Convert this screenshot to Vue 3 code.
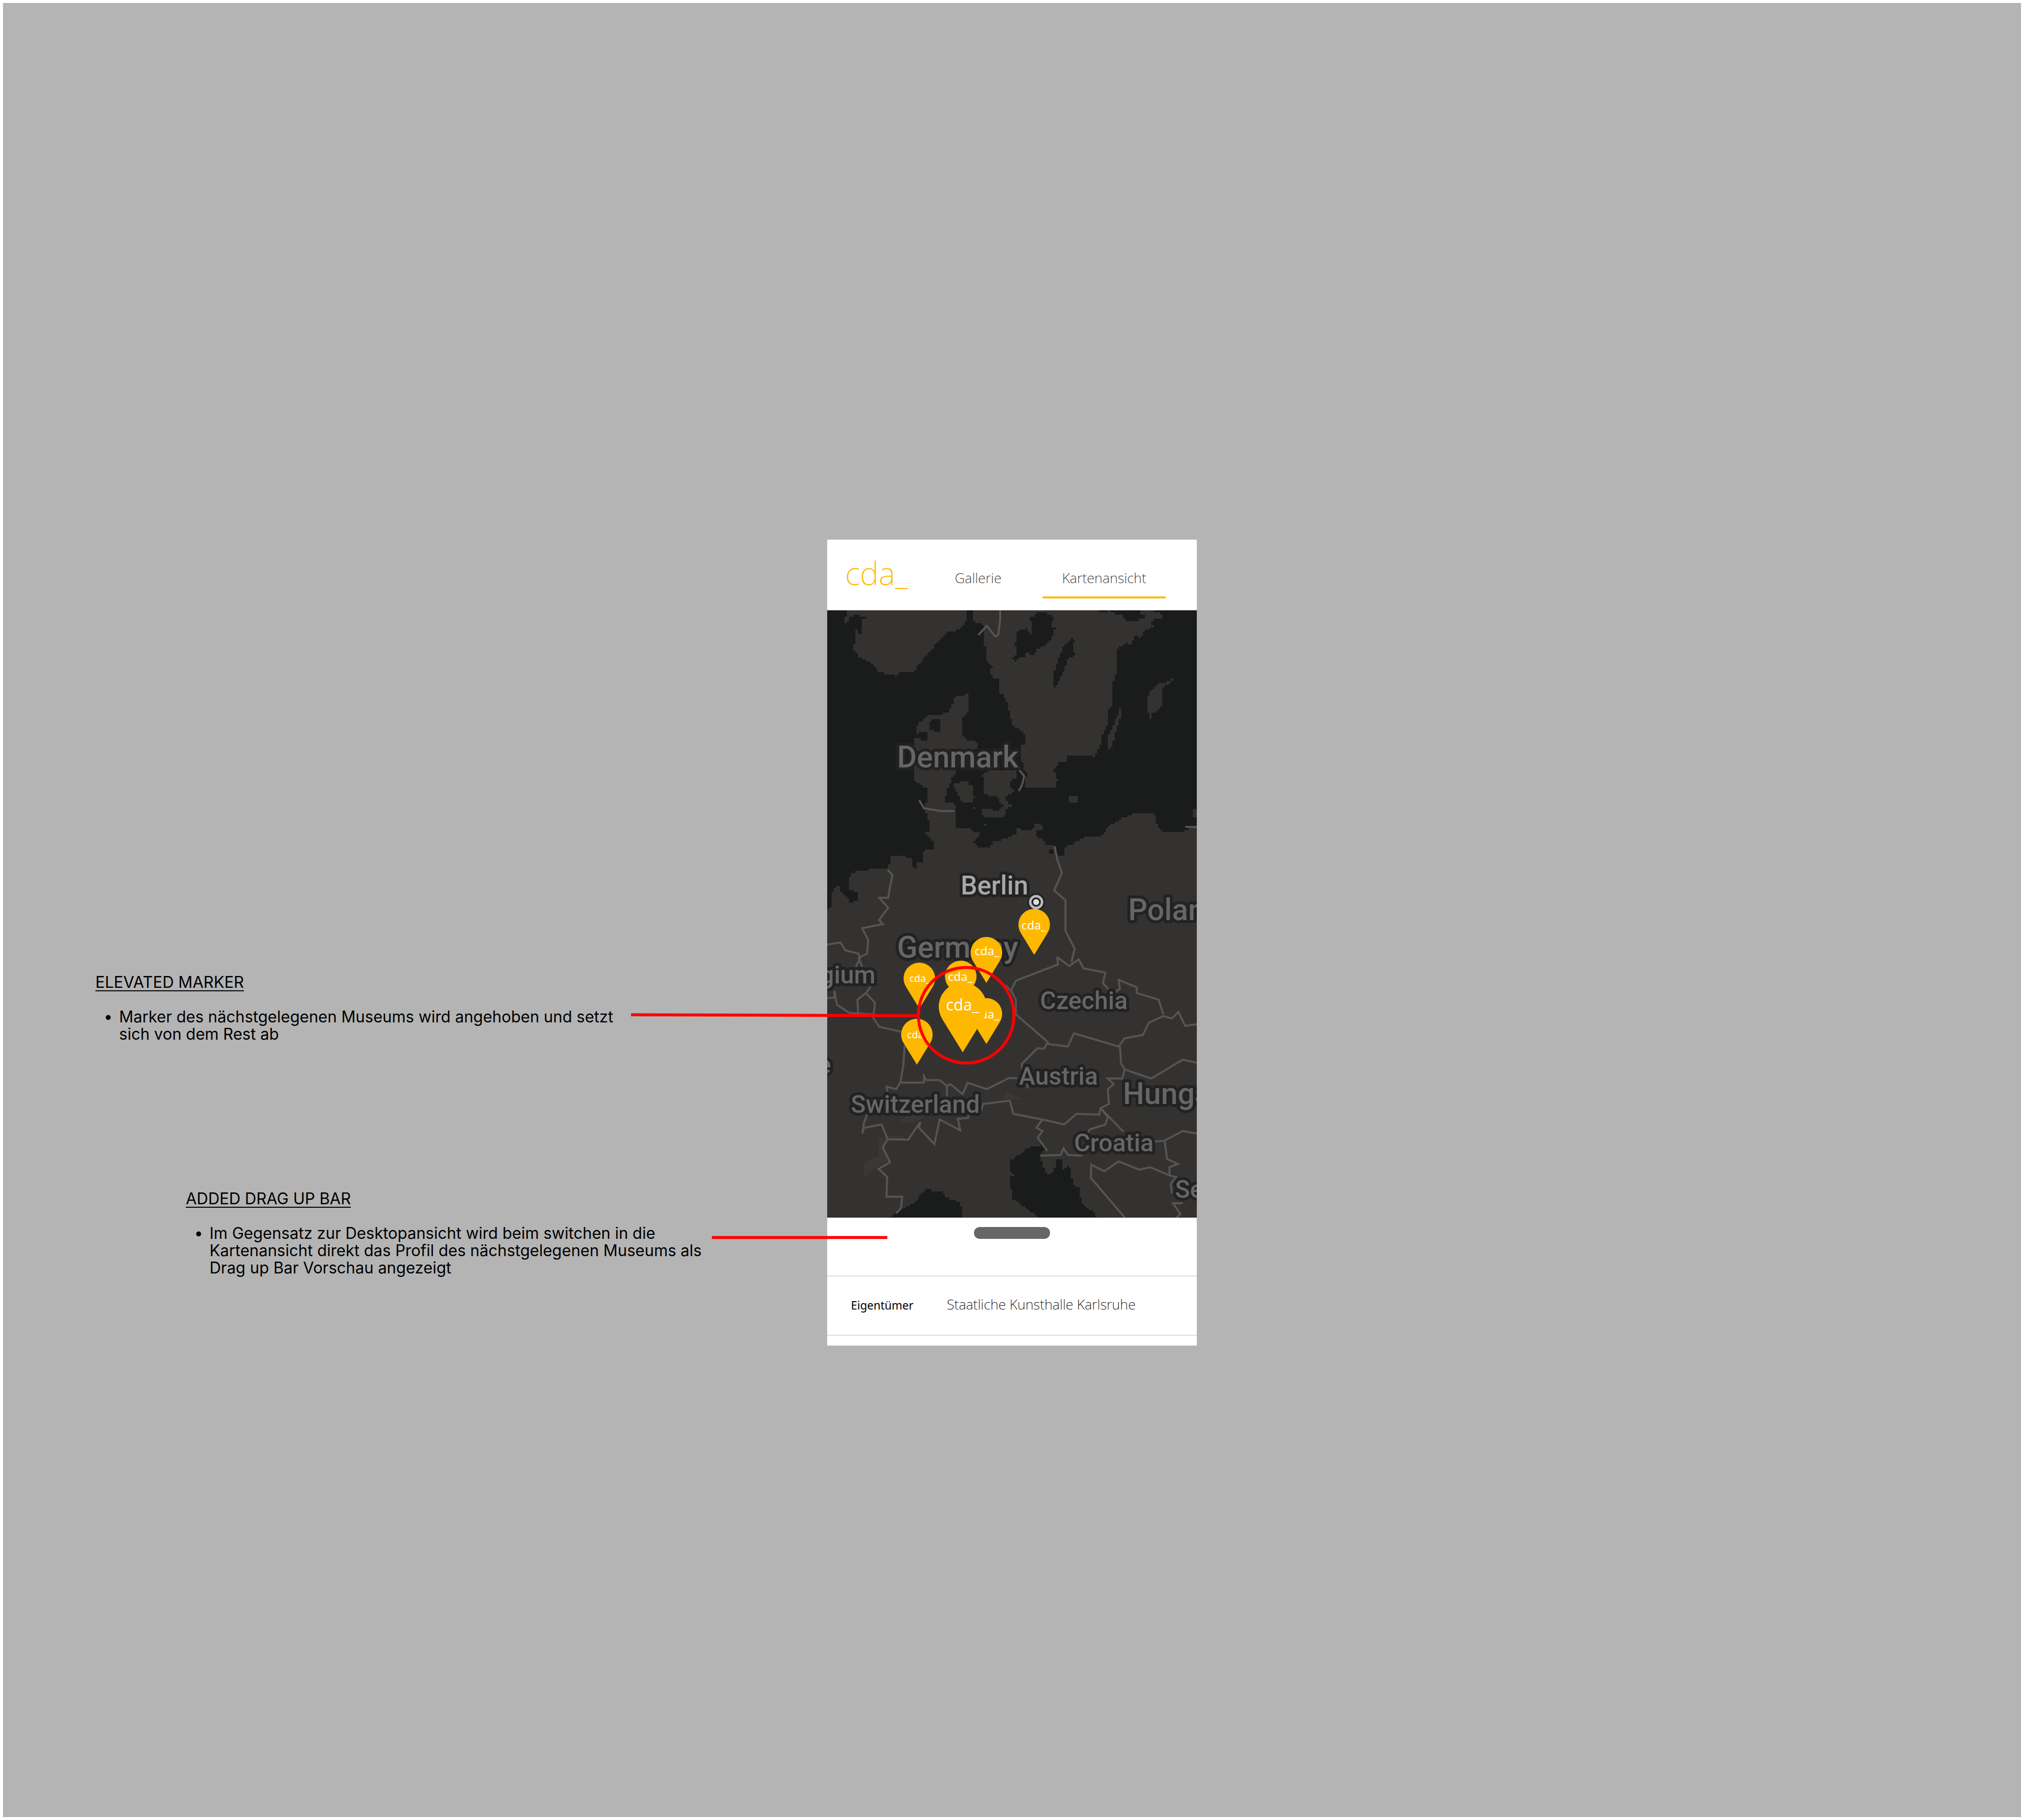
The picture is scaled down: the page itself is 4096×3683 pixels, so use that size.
<script setup>
const CELL_X = 9
const CELL_Y = 13

// Turns an outline into a stepped path, one step per map raster cell.
function stepped(outline) {
  const pts = outline.trim().split(/\s+/).map((p) => p.split(',').map(Number))
  const snap = ([x, y]) => [
    Math.round((x - 20) / CELL_X) * CELL_X + 20,
    Math.round((y - 30) / CELL_Y) * CELL_Y + 30
  ]
  const start = snap(pts[0])
  let d = `M${start[0]} ${start[1]}`
  pts.forEach((a, i) => {
    const b = pts[(i + 1) % pts.length]
    const n = Math.max(1, Math.round(Math.max(Math.abs(b[0] - a[0]) / CELL_X, Math.abs(b[1] - a[1]) / CELL_Y)))
    for (let s = 1; s <= n; s++) {
      const [x, y] = snap([a[0] + ((b[0] - a[0]) * s) / n, a[1] + ((b[1] - a[1]) * s) / n])
      d += `H${x}V${y}`
    }
  })
  return d + 'Z'
}

const land = [
  '100,30 597,30 597,70 588,120 570,145 545,160 525,155 490,215 440,290 405,350 380,405 330,408 310,432 300,420 260,415 232,405 230,375 200,345 155,310 130,262 135,185 135,135 145,175 168,175 160,100 178,65 135,60 115,75 105,110 92,110 92,75 100,70',
  '625,30 1135,30 1145,45 1175,45 1180,35 1200,38 1205,58 1240,62 1250,97 1305,97 1310,85 1332,82 1332,60 1315,55 1315,30 1360,30 1370,45 1395,50 1405,85 1360,90 1368,135 1330,155 1318,200 1295,180 1280,240 1265,230 1215,265 1212,455 1195,460 1202,600 1180,635 1185,720 1160,780 1150,850 1130,910 1120,935 1115,912 1010,912 1010,948 985,950 965,985 958,1020 972,1075 965,1103 843,1103 843,1050 850,1020 835,1000 818,900 820,848 843,845 843,800 785,715 765,590 745,540 730,535 728,450 712,440 697,405 700,365 680,325 670,230 668,115 640,105 625,80',
  '1445,447 1447,458 1405,512 1405,585 1410,600 1370,660 1355,703 1350,650 1343,620 1343,550 1360,510 1385,475 1420,468',
  '1230,628 1237,680 1220,740 1210,800 1195,860 1180,898 1177,800 1190,770 1205,720',
  '1020,1157 1037,1157 1054,1170 1054,1195 1020,1195',
  '595,525 607,565 607,650 582,690 582,795 592,820 633,820 640,870 600,890 555,1003 553,1025 530,1045 530,1078 520,1095 518,1165 502,1175 510,1205 525,1198 548,1220 553,1270 555,1352 612,1362 620,1388 650,1375 652,1405 627,1445 635,1465 690,1475 705,1440 755,1415 800,1385 802,1352 825,1355 820,1375 870,1373 872,1312 880,1335 903,1325 912,1373 885,1370 880,1410 905,1420 922,1465 965,1467 968,1515 972,1528 1000,1528 1000,1470 1030,1455 1075,1415 1120,1412 1160,1395 1180,1340 1230,1302 1300,1260 1368,1260 1385,1345 1398,1375 1455,1378 1480,1388 1510,1360 1520,1340 1560,1335 1560,3730 20,3730 20,1850 38,1820 38,1740 55,1710 72,1715 75,1740 92,1775 110,1790 110,1812 142,1790 142,1740 112,1720 110,1690 117,1625 170,1615 215,1598 245,1598 275,1615 275,1580 285,1530 360,1532 370,1565 372,1595 388,1605 390,1570 413,1568 413,1505 425,1492 457,1490 457,1440 445,1405 425,1382 448,1370 445,1330 425,1240 432,1180 432,1110 380,1065 380,810 425,825 440,830 432,770 390,780 390,735 405,700 430,668 485,665 520,645 535,600 548,550 585,548',
  '530,1078 560,1080 565,1065 600,1068 605,1100 622,1095 625,1165 632,1180 622,1205 590,1200 565,1155 545,1100',
  '690,1003 740,1010 800,1003 805,1055 775,1070 778,1110 790,1140 755,1160 755,1190 770,1215 790,1212 785,1222 765,1228 755,1275 735,1297 690,1295 660,1265 662,1238 690,1245 710,1258 745,1215 735,1185 710,1158 680,1150 668,1140 668,1040 660,1030',
  '1528,1235 1560,1235 1560,1285 1528,1285',
  '668,1336 677,1336 677,1349 668,1349',
  '625,1220 634,1220 634,1233 625,1233'
].map(stepped)

const water = [
  '880,50 905,45 945,60 955,80 945,130 962,145 948,210 930,240 890,265 875,305 850,285 835,310 805,340 775,325 800,290 805,260 795,235 808,150 840,138 855,170 868,172 862,100 853,65 862,75 872,60',
  '1030,203 1045,210 1032,270 1043,300 1012,335 1005,380 990,430 965,497 957,490 960,400 970,340 995,250',
  '460,693 485,693 485,768 465,768 442,755 442,705',
  '940,1492 958,1492 958,1517 940,1517',
  '850,3300 900,3285 922,3300 920,3315 900,3340 910,3420 935,3477 965,3410 968,3375 990,3375 995,3435 1012,3415 1027,3420 1035,3530 1060,3550 1075,3650 1130,3705 1132,3730 905,3730 860,3680 785,3605 775,3480 798,3460 780,3430 778,3375 810,3340',
  '270,3730 300,3695 385,3630 400,3590 425,3555 490,3570 520,3615 570,3630 580,3720 582,3730'
].map(stepped)

const borders = [
  '735,30 735,90 727,180 715,190 680,125 645,180',
  '400,1185 420,1235 490,1252 545,1252',
  '805,985 835,1040 825,1095 812,1130',
  '1500,1348 1548,1350',
  '270,1610 290,1640 280,1710 272,1780 235,1780 272,1840 235,1915 250,1940 165,1965 190,2040 185,2120 150,2145 165,2200',
  '20,2065 75,2052 95,2100 150,2120 155,2150 138,2200',
  '200,2320 180,2360 145,2400 148,2485',
  '180,2360 218,2420 210,2510 235,2565 325,2595',
  '20,2390 50,2388 50,2345 60,2430 110,2480 210,2490',
  '960,1465 970,1540 990,1630 958,1735 1005,1795 1005,1980 1043,2090 1030,2170',
  '970,2140 1020,2195 1060,2155 1080,2210 1170,2235 1160,2300 1200,2365 1230,2335 1225,2280 1300,2325 1300,2360 1390,2400 1410,2490',
  '970,2140 975,2185 800,2285 780,2345 800,2400 800,2490 930,2655 935,2670 1015,2685 1040,2605 1225,2685 1250,2635 1325,2615 1350,2540 1410,2500 1445,2515 1472,2475 1500,2560 1548,2550',
  '755,2310 780,2345',
  '930,2665 915,2700 890,2695 825,2790 825,2820 850,2940',
  '1230,2685 1235,2790 1250,2825 1240,2880 1180,2880 1205,2915 1180,2945 1185,3035 1150,3060 1145,3100 1050,3095 1000,3160 910,3130 790,3095 775,3015 665,3035 655,3080',
  '1250,2825 1360,2880 1490,2765 1548,2785',
  '340,2680 335,2800 322,2905 420,2905 420,2865 430,2890 485,2890 515,2925 530,2915 580,2975 600,2905 680,2945 770,2878 805,2878',
  '515,2925 515,2990',
  '322,2905 305,2945 265,2930 270,2960',
  '185,3100 172,3150 165,3215 172,3180 245,3160 270,3250 355,3252 405,3145 400,3180 463,3280 485,3130 570,3195 560,3125 603,3120 605,3090',
  '270,3250 250,3300 280,3390 232,3430 268,3480 265,3600 330,3600 325,3670 305,3700',
  '910,3130 885,3180 910,3200 890,3240 930,3320',
  '900,3350 985,3345 997,3305 1015,3345 1075,3350',
  '1150,3060 1180,3115 1170,3160 1105,3190 1100,3210',
  '1150,3060 1245,3205',
  '1370,3265 1415,3258 1490,3200 1548,3215',
  '1415,3258 1425,3370 1470,3400 1435,3420 1435,3465',
  '1250,3726 1110,3485 1112,3405 1165,3445 1225,3385 1310,3435 1355,3420 1435,3470 1462,3480 1440,3520 1445,3580',
  '1490,3640 1450,3640 1480,3705 1465,3726'
]

const labels = [
  { name: 'Denmark', x: 142, y: 319, size: 'l' },
  { name: 'Germany', x: 142, y: 705, size: 'l' },
  { name: 'Poland', x: 611, y: 629, size: 'l' },
  { name: 'Hungary', x: 600, y: 1002, size: 'l' },
  { name: 'Berlin', x: 271, y: 577, size: 'm', city: true },
  { name: 'Belgium', x: 98, y: 757, size: 'm', end: true },
  { name: 'France', x: 8, y: 940, size: 'm', end: true },
  { name: 'Czechia', x: 432, y: 809, size: 'm' },
  { name: 'Austria', x: 389, y: 963, size: 'm' },
  { name: 'Switzerland', x: 48, y: 1020, size: 'm' },
  { name: 'Croatia', x: 501, y: 1098, size: 'm' },
  { name: 'Serbia', x: 706, y: 1192, size: 'm' }
]

// x/y: tip of the pin; tx/ty: start of its caption
const pins = [
  { x: 420, y: 699, tx: 394, ty: 648, size: 'm' },
  { x: 271, y: 804, tx: 245, ty: 752, size: 'm' },
  { x: 323, y: 756, tx: 299, ty: 700, size: 'm' },
  { x: 187, y: 808, tx: 167, ty: 754, size: 's' },
  { x: 182, y: 922, tx: 162, ty: 868, size: 's' },
  { x: 323, y: 880, tx: 299, ty: 828, size: 'm' },
  { x: 275, y: 897, tx: 241, ty: 812, size: 'l', elevated: true }
]
</script>

<template>
  <main class="board">
    <section class="notes">
      <article class="note">
        <h2>ELEVATED MARKER</h2>
        <ul>
          <li>Marker des nächstgelegenen Museums wird angehoben und setzt sich von dem Rest ab</li>
        </ul>
      </article>
      <article class="note note-drag">
        <h2>ADDED DRAG UP BAR</h2>
        <ul>
          <li>Im Gegensatz zur Desktopansicht wird beim switchen in die Kartenansicht direkt das Profil des nächstgelegenen Museums als Drag up Bar Vorschau angezeigt</li>
        </ul>
      </article>
    </section>

    <section class="phone">
      <header class="topbar">
        <a class="logo" href="#">cda_</a>
        <nav class="tabs">
          <a class="tab" href="#gallerie">Gallerie</a>
          <a class="tab active" href="#karte">Kartenansicht</a>
        </nav>
      </header>

      <svg class="map" viewBox="0 0 750 1232" role="img" aria-label="Karte">
        <svg width="750" height="1232" viewBox="20 30 1528 3696" preserveAspectRatio="none">
          <path v-for="(d, i) in land" :key="'l' + i" class="land" :d="d" />
          <path v-for="(d, i) in water" :key="'w' + i" class="water" :d="d" />
          <polygon class="relief" points="172,3390 232,3350 232,3240 330,3225 340,3250 262,3260 250,3300 270,3380 172,3478" />
          <polygon class="relief" points="320,3140 345,3110 425,3110 375,3155" />
          <polygon class="relief" points="765,2960 825,3010 745,3005" />
          <polyline v-for="(p, i) in borders" :key="'b' + i" class="border" :points="p" />
        </svg>
        <text
          v-for="l in labels"
          :key="l.name"
          :x="l.x"
          :y="l.y"
          :class="['label', 'label-' + l.size, { city: l.city, end: l.end }]"
        >{{ l.name }}</text>
        <circle class="capital-halo" cx="424" cy="592" r="18" />
        <circle class="capital-ring" cx="424" cy="592" r="12" />
        <circle class="capital-dot" cx="424" cy="592" r="6" />
        <g v-for="(p, i) in pins" :key="'p' + i">
          <path
            class="pin"
            d="M0 0L-27-44A32 32 0 1 1 27-44Z"
            :transform="`translate(${p.x} ${p.y}) scale(${p.elevated ? 1.52 : 1})`"
          />
          <text :class="['pin-text', 'pin-' + p.size]" :x="p.tx" :y="p.ty">cda_</text>
        </g>
      </svg>

      <div class="sheet">
        <button class="handle" type="button" aria-label="Profil hochziehen"></button>
        <dl class="row">
          <dt>Eigentümer</dt>
          <dd>Staatliche Kunsthalle Karlsruhe</dd>
        </dl>
      </div>

      <svg class="callouts" viewBox="0 0 750 1638" aria-hidden="true">
        <path d="M-398 964L184 966M-234 1416H122" />
        <circle cx="282" cy="965" r="97" />
      </svg>
    </section>
  </main>
</template>

<style>
body {
  margin: 0;
  background: #fff;
}
</style>

<style scoped>
.board {
  box-sizing: border-box;
  display: grid;
  grid-template-columns: minmax(0, 1fr) minmax(0, 748px) minmax(0, 1fr);
  align-items: start;
  min-height: 100vh;
  padding-top: 1086px;
  border: 6px solid #fff;
  background: #b4b4b4;
  overflow: hidden;
}

.notes {
  display: flex;
  flex-direction: column;
  gap: 298px;
  padding: 878px 0 0 187px;
}

.note {
  max-width: 1060px;
  font: 400 32px/35px Inter, sans-serif;
  color: #000;
}

.note-drag {
  margin-left: 183px;
}

.note h2 {
  margin: 0 0 35px;
  font: inherit;
  text-decoration: underline;
  text-decoration-thickness: 2px;
  text-underline-offset: 5px;
}

.note ul {
  margin: 0;
  padding-left: 48px;
}

.phone {
  position: relative;
  background: #fff;
}

.topbar {
  display: flex;
  align-items: flex-start;
  justify-content: space-between;
  height: 143px;
  box-sizing: border-box;
  padding: 36px 63px 0 36px;
}

.logo {
  font: 200 64px/64px "Noto Sans", sans-serif;
  color: #ffb800;
  text-decoration: none;
}

.tabs {
  display: flex;
  gap: 6px;
  padding-top: 23px;
}

.tab {
  box-sizing: border-box;
  width: 249px;
  padding-bottom: 20px;
  border-bottom: 4px solid transparent;
  font: 200 28px/36px "Noto Sans", sans-serif;
  text-align: center;
  color: #222;
  text-decoration: none;
}

.tab.active {
  border-color: #ffb800;
}

.map {
  display: block;
  width: 100%;
  background: #1a1c1b;
}

.land {
  fill: #343231;
  shape-rendering: crispEdges;
}

.water {
  fill: #1a1c1b;
  shape-rendering: crispEdges;
}

.relief {
  fill: #393837;
}

.border {
  fill: none;
  stroke: #565554;
  stroke-width: 4px;
  vector-effect: non-scaling-stroke;
}

.label {
  font-family: Roboto, sans-serif;
  font-weight: 500;
  fill: #666;
  stroke: #222;
  stroke-width: 12px;
  stroke-linejoin: round;
  paint-order: stroke;
}

.label-l {
  font-size: 61px;
}

.label-m {
  font-size: 50px;
}

.city {
  font-size: 53px;
  fill: #a8a8a8;
}

.end {
  text-anchor: end;
}

.capital-halo {
  fill: #222;
}

.capital-ring {
  fill: none;
  stroke: #bbb;
  stroke-width: 5px;
}

.capital-dot {
  fill: #ddd;
}

.pin {
  fill: #ffb800;
}

.pin-text {
  font-family: "Noto Sans", sans-serif;
  fill: #fff;
}

.pin-s {
  font-size: 20px;
}

.pin-m {
  font-size: 24px;
}

.pin-l {
  font-size: 32px;
}

.sheet {
  display: flex;
  flex-direction: column;
  align-items: center;
  padding-bottom: 20px;
}

.handle {
  width: 154px;
  height: 24px;
  margin: 19px 0 74px;
  padding: 0;
  border: 0;
  border-radius: 12px;
  background: #666;
}

.row {
  box-sizing: border-box;
  display: grid;
  grid-template-columns: 194px 1fr;
  align-items: baseline;
  width: 100%;
  margin: 0;
  padding: 36px 0 40px 48px;
  border: 2px solid #ddd;
  border-width: 2px 0;
  color: #000;
}

.row dt {
  font: 400 23px/40px "Noto Sans", sans-serif;
}

.row dd {
  margin: 0;
  font: 200 28px/40px "Noto Sans", sans-serif;
}

.callouts {
  position: absolute;
  top: 0;
  left: 0;
  width: 100%;
  overflow: visible;
  fill: none;
  stroke: #f00;
  stroke-width: 6px;
  pointer-events: none;
}
</style>
